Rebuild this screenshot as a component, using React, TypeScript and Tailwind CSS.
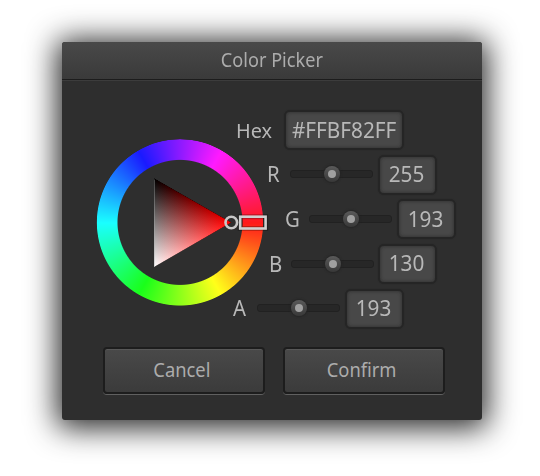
type ChannelProps = { label: string; value: string; inset: string; labelWidth: string; fieldGap: string };

const channels: ChannelProps[] = [
  { label: 'R', value: '255', inset: 'pl-[205px]', labelWidth: 'w-[23px]', fieldGap: 'ml-[4.5px]' },
  { label: 'G', value: '193', inset: 'pl-[223px]', labelWidth: 'w-[24px]', fieldGap: 'ml-[4.5px]' },
  { label: 'B', value: '130', inset: 'pl-[207px]', labelWidth: 'w-[22px]', fieldGap: 'ml-[3.5px]' },
  { label: 'A', value: '193', inset: 'pl-[171px]', labelWidth: 'w-[24px]', fieldGap: 'ml-[4.5px]' },
];

function Field({ value, width, pad }: { value: string; width: string; pad: string }) {
  return (
    <div
      className={`${width} ${pad} flex h-[40px] shrink-0 items-center justify-center rounded-[6px] border-2 border-[#252525] bg-[#484848] text-[21.5px] leading-none text-[#b8b8b8] shadow-[inset_0_0_3px_1px_#363636,0_0_1px_#262626]`}
    >
      <span className="scale-x-[.965]">{value}</span>
    </div>
  );
}

function Slider() {
  return (
    <div className="mb-px flex h-[8px] w-[83px] shrink-0 items-center justify-center rounded-[3px] border border-[#212121] bg-[#272727]">
      <div className="flex size-[16px] shrink-0 items-center justify-center rounded-full bg-linear-to-b from-[#5a5a5a] to-[#383838] shadow-[0_0_2px_1px_#242424]">
        <div className="size-[8px] rounded-full bg-[#a0a0a0]" />
      </div>
    </div>
  );
}

function Channel({ label, value, inset, labelWidth, fieldGap }: ChannelProps) {
  return (
    <div className={`${inset} flex h-[44.8px] items-center`}>
      <span className={`${labelWidth} shrink-0 origin-left scale-x-[.97] text-[21px] leading-none`}>{label}</span>
      <Slider />
      <div className={fieldGap}>
        <Field value={value} width="w-[59px]" pad="pr-[2px] pb-[2px]" />
      </div>
    </div>
  );
}

function Wheel() {
  return (
    <div className="relative size-[168px]">
      <div className="size-full rounded-full bg-[conic-gradient(from_90deg,#ff1a1a,#ffff1a,#1aff1a,#1affff,#1a1aff,#ff1aff,#ff1a1a)] [mask:radial-gradient(circle_at_84px_83.4px,transparent_62px,#000_63px,#000_82.7px,transparent_83.6px)]" />
      <svg className="absolute inset-0 isolate overflow-visible" width="168" height="168" viewBox="96 139 168 168">
        <defs>
          <linearGradient id="hue" gradientUnits="userSpaceOnUse" x1="154" y1="223" x2="229" y2="223">
            <stop stopColor="#000" />
            <stop offset="1" stopColor="#f00" />
          </linearGradient>
          <linearGradient id="white" gradientUnits="userSpaceOnUse" x1="191.5" y1="200.7" x2="154" y2="267">
            <stop stopColor="#000" />
            <stop offset="1" stopColor="#fff" />
          </linearGradient>
        </defs>
        <path d="M154 178.5 231 222.5 154 267Z" fill="url(#hue)" />
        <path d="M154 178.5 231 222.5 154 267Z" fill="url(#white)" className="mix-blend-plus-lighter" />
        <path d="M154.5 179.5V266.5" stroke="#aaa" strokeOpacity=".4" />
        <g fill="none">
          <rect x="240.2" y="216.7" width="25.4" height="11.8" stroke="#000" strokeOpacity=".25" strokeWidth="5" />
          <rect x="240.2" y="216.7" width="25.4" height="11.8" stroke="#d0d0d0" strokeWidth="2.6" />
          <circle cx="231.3" cy="222.5" r="5.8" stroke="#c8c8c8" strokeWidth="2.6" />
        </g>
      </svg>
    </div>
  );
}

function Button({ label }: { label: string }) {
  return (
    <button className="h-[47px] w-[162px] rounded-[4px] border-2 border-[#1d1d1d] bg-linear-to-b from-[#494949] to-[#3b3b3b] pb-px text-[19.5px] leading-none text-[#acacac] shadow-[inset_0_1px_0_#585858,0_1px_0_#606060]">
      <span className="inline-block -translate-x-[2.5px] scale-x-[.94]">{label}</span>
    </button>
  );
}

export default function App() {
  return (
    <div className="h-[476px] w-[540px] overflow-hidden bg-white pt-[42px] pl-[62px] font-['Noto_Sans',sans-serif] text-[#b8b8b8]">
      <div className="h-[378px] w-[420px] rounded-[3px] bg-[#2e2e2e] shadow-[0_3px_30px_5px_rgba(0,0,0,0.85)]">
        <header className="flex h-[38px] items-center justify-center rounded-t-[3px] border-b border-[#1c1c1c] bg-linear-to-b from-[#494949] to-[#3a3a3a] pb-px text-[19.5px] leading-none text-[#acacac] shadow-[0_1px_0_#3c3c3c]">
          <span className="scale-x-[.93]">Color Picker</span>
        </header>
        <main className="grid h-[267px]">
          <div className="pt-[59px] pl-[34px] [grid-area:1/1]">
            <Wheel />
          </div>
          <div className="pt-[27.4px] [grid-area:1/1]">
            <div className="flex h-[44.8px] items-center pl-[174px] text-[20.5px] leading-none">
              <span className="w-[47.5px] origin-left scale-x-[.97]">Hex</span>
              <Field value="#FFBF82FF" width="w-[120px]" pad="pl-[1px]" />
            </div>
            {channels.map((c) => (
              <Channel key={c.label} {...c} />
            ))}
          </div>
        </main>
        <footer className="flex gap-[18px] pl-[41px]">
          <Button label="Cancel" />
          <Button label="Confirm" />
        </footer>
      </div>
    </div>
  );
}
